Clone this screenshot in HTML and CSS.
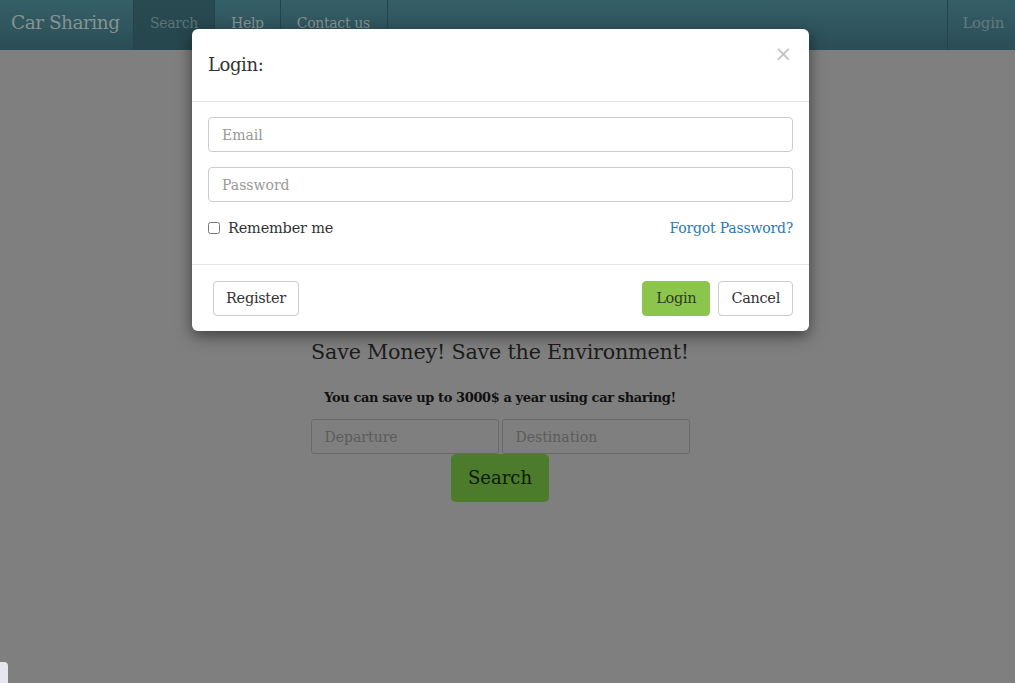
FILE: index.html
```html
<!DOCTYPE html>
<html lang="en">
<head>
<meta charset="utf-8">
<title>Car Sharing</title>
<link rel="stylesheet" href="styles.css">
</head>
<body>
<nav class="navbar">
  <a class="brand" href="#">Car Sharing</a>
  <ul class="nav">
    <li class="active"><a href="#">Search</a></li>
    <li><a href="#">Help</a></li>
    <li><a href="#">Contact us</a></li>
  </ul>
  <ul class="nav nav-right">
    <li><a href="#">Login</a></li>
  </ul>
</nav>

<main class="page">
  <h2 class="headline">Save Money! Save the Environment!</h2>
  <p class="subline">You can save up to 3000$ a year using car sharing!</p>
  <form class="search-form">
    <div class="search-row">
      <input class="page-input" type="text" placeholder="Departure">
      <input class="page-input" type="text" placeholder="Destination">
    </div>
    <button class="search-btn" type="button">Search</button>
  </form>
</main>

<div class="side-tab"></div>

<div class="modal">
  <div class="modal-header">
    <h4 class="modal-title">Login:</h4>
    <button class="close" type="button">&times;</button>
  </div>
  <div class="modal-body">
    <input class="form-input" type="email" placeholder="Email">
    <input class="form-input" type="password" placeholder="Password">
    <div class="options">
      <label class="remember"><input type="checkbox"> Remember me</label>
      <a class="forgot" href="#">Forgot Password?</a>
    </div>
  </div>
  <div class="modal-footer">
    <button class="btn" type="button">Register</button>
    <div class="footer-right">
      <button class="btn btn-success" type="button">Login</button>
      <button class="btn" type="button">Cancel</button>
    </div>
  </div>
</div>
</body>
</html>
```

FILE: styles.css
```css
* { box-sizing: border-box; }
html, body { margin: 0; padding: 0; }
body {
  width: 1015px;
  height: 683px;
  overflow: hidden;
  background: #7f7f7f;
  font-family: "DejaVu Serif", "Liberation Serif", serif;
  color: #1a1a1a;
  position: relative;
}

/* navbar (dimmed by modal backdrop) */
.navbar {
  height: 50px;
  display: flex;
  background: linear-gradient(#355f68, #2b4d55);
}
.brand {
  display: flex;
  align-items: center;
  white-space: nowrap;
  padding: 0 0 5px 11px;
  width: 134px;
  font-size: 18.5px;
  color: #879292;
  text-decoration: none;
  border-right: 1px solid #25434a;
  letter-spacing: -0.5px;
}
.nav {
  display: flex;
  list-style: none;
  margin: 0;
  padding: 0;
}
.nav li { display: flex; border-right: 1px solid #25434a; }
.nav a {
  display: flex;
  align-items: center;
  white-space: nowrap;
  padding: 0 16px 5px;
  font-size: 14px;
  color: #879292;
  text-decoration: none;
  letter-spacing: -0.3px;
}
.nav li.active { background: linear-gradient(#284a51, #27464d); }
.nav li.active a { color: #5c7479; padding: 0 16px 5px 16px; }
.nav li:nth-child(3) a { padding: 0 17px 5px 16px; }
.nav-right { margin-left: auto; }
.nav-right li { border-right: 0; border-left: 1px solid #25434a; }
.nav-right a { color: #637a7f; padding: 0 11px 5px 14px; font-size: 15px; }

/* page content */
.page {
  width: 1000px;
  display: flex;
  flex-direction: column;
  align-items: center;
  padding-top: 290px;
}
.headline {
  margin: 0;
  font-weight: normal;
  font-size: 20.7px;
  color: #1c1c1c;
  line-height: 24px;
  letter-spacing: -0.2px;
}
.subline {
  margin: 26px 0 14px;
  font-weight: bold;
  font-size: 13px;
  color: #111;
  letter-spacing: -0.4px;
}
.search-form {
  display: flex;
  flex-direction: column;
  align-items: center;
}
.search-row { display: flex; gap: 3px; }
.page-input {
  width: 188px;
  height: 35px;
  border: 1px solid #6a6a6a;
  border-radius: 3px;
  background: #7f7f7f;
  padding: 0 13px;
  font-family: inherit;
  font-size: 14px;
}
.page-input::placeholder { color: #5c5c5c; }
.search-btn {
  width: 98px;
  height: 48px;
  border: 0;
  border-radius: 5px;
  background: #4c7b2b;
  color: #0f180a;
  font-family: inherit;
  font-size: 18px;
  padding-bottom: 2px;
}

.side-tab {
  position: absolute;
  left: 0;
  top: 662px;
  width: 8px;
  height: 21px;
  background: #e6e6ee;
  border-radius: 0 4px 0 0;
}

/* modal */
.modal {
  position: absolute;
  left: 192px;
  top: 29px;
  width: 617px;
  background: #fff;
  border-radius: 6px;
  box-shadow: 0 5px 15px rgba(0, 0, 0, 0.5);
  color: #333;
}
.modal-header {
  height: 73px;
  display: flex;
  align-items: center;
  justify-content: space-between;
  padding: 0 17px 0 16px;
  border-bottom: 1px solid #e5e5e5;
}
.modal-title {
  margin: 0 0 2px;
  font-weight: normal;
  font-size: 18px;
  color: #333;
  letter-spacing: -0.4px;
}
.close {
  align-self: flex-start;
  margin-top: 14px;
  border: 0;
  background: none;
  padding: 0;
  font-family: "DejaVu Sans", sans-serif;
  font-size: 21px;
  line-height: 22px;
  color: #c4c4c4;
}
.modal-body {
  padding: 15px 16px 0;
  display: flex;
  flex-direction: column;
  gap: 15px;
  height: 163px;
  border-bottom: 1px solid #e5e5e5;
}
.form-input {
  height: 35px;
  width: 100%;
  border: 1px solid #ccc;
  border-radius: 4px;
  padding: 0 13px;
  font-family: inherit;
  font-size: 14px;
  color: #333;
}
.form-input::placeholder { color: #999; }
.options {
  display: flex;
  justify-content: space-between;
  align-items: center;
  margin-top: 3px;
}
.remember {
  display: flex;
  align-items: center;
  gap: 8px;
  font-size: 14.5px;
  color: #333;
  letter-spacing: -0.2px;
}
.remember input { margin: 0; width: 12px; height: 12px; }
.forgot {
  font-size: 14px;
  color: #2a7ab1;
  text-decoration: none;
  letter-spacing: -0.2px;
}
.modal-footer {
  height: 66px;
  display: flex;
  align-items: center;
  justify-content: space-between;
  padding: 0 16px 0 21px;
}
.footer-right { display: flex; gap: 8px; }
.btn {
  height: 35px;
  padding: 0 12px;
  border: 1px solid #ccc;
  border-radius: 4px;
  background: #fff;
  font-family: inherit;
  font-size: 14.5px;
  color: #333;
  letter-spacing: -0.3px;
}
.btn-success {
  padding: 0 13px;
  background: #8cc54c;
  border-color: #8cc54c;
  color: #2f3a24;
}
```
